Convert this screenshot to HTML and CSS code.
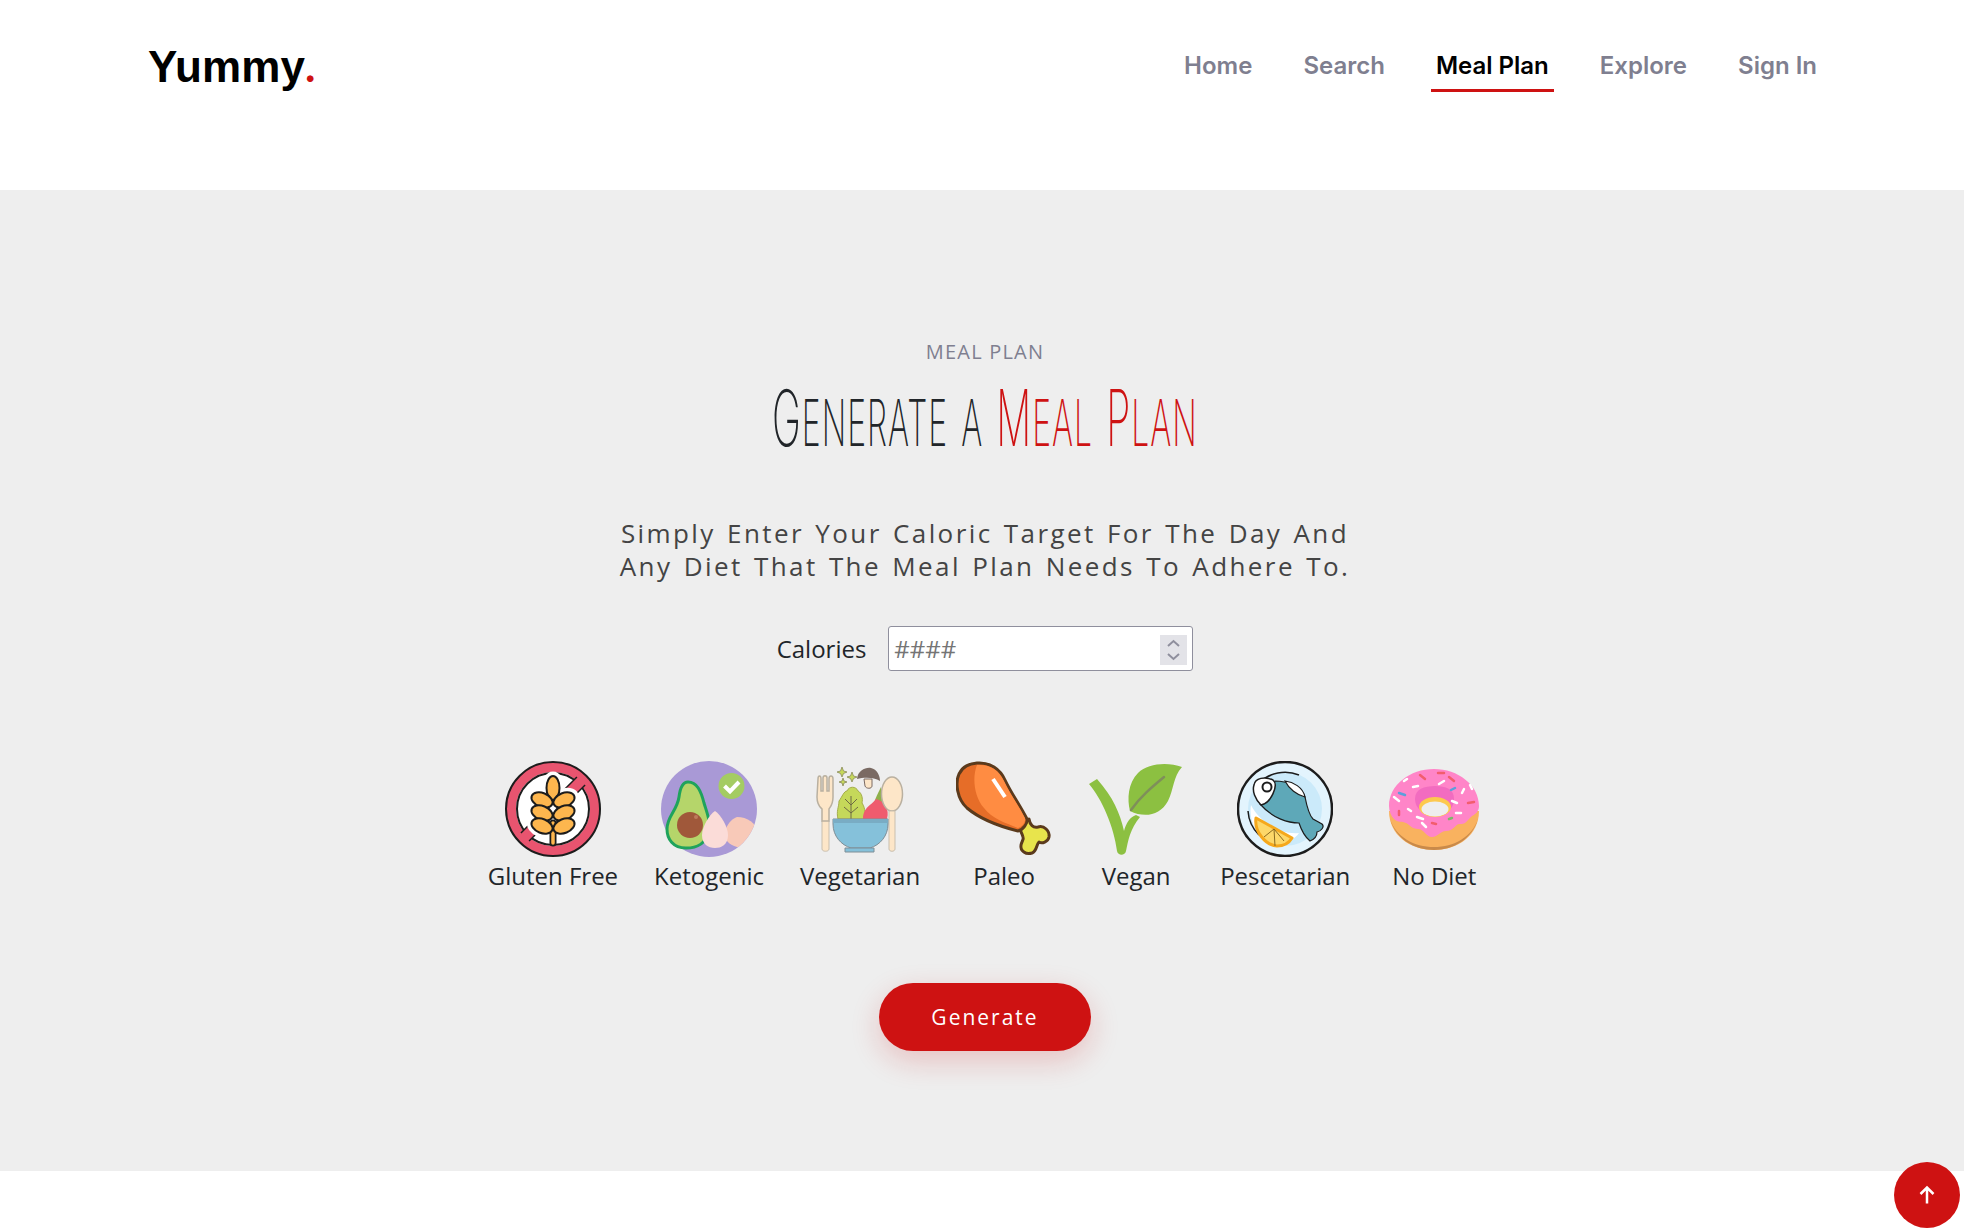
FILE: index.html
```html
<!DOCTYPE html>
<html lang="en">

<head>
    <meta charset="UTF-8">
    <title>Yummy - Meal Plan</title>
    <link rel="stylesheet" href="styles.css">
</head>

<body>

    <header class="header">
        <a class="logo" href="#">Yummy<span class="logo-dot">.</span></a>
        <nav class="nav">
            <a href="#">Home</a>
            <a href="#">Search</a>
            <a class="active" href="#">Meal Plan</a>
            <a href="#">Explore</a>
            <a href="#">Sign In</a>
        </nav>
    </header>

    <section class="plan">
        <p class="eyebrow">MEAL PLAN</p>
        <h1 class="title">
            <span class="title-inner"><span class="cap">G</span>enerate a <span class="red"><span class="cap">M</span>eal <span class="cap">P</span>lan</span></span>
        </h1>
        <p class="intro">Simply Enter Your Caloric Target For The Day And<br>Any Diet That The Meal Plan Needs To Adhere To.</p>

        <div class="calories">
            <label for="calories">Calories</label>
            <div class="input-wrap">
                <input id="calories" type="number" placeholder="####">
                <span class="spin">
                    <svg viewBox="0 0 27 30" width="27" height="30">
                        <path d="M8 11 L13.500 6 L19 11 M8 19 L13.500 24 L19 19" fill="none" stroke="#8f8f9d" stroke-width="2"/>
                    </svg>
                </span>
            </div>
        </div>

        <div class="diets">
            <div class="diet">
                <svg viewBox="0 0 96 96" width="96" height="96">
                    <defs>
                        <g id="wheat">
                            <ellipse cx="48" cy="27" rx="6.500" ry="12"/>
                            <ellipse cx="37" cy="39" rx="11" ry="7" transform="rotate(22 37 39)"/>
                            <ellipse cx="59" cy="39" rx="11" ry="7" transform="rotate(-22 59 39)"/>
                            <ellipse cx="37" cy="52" rx="11" ry="7" transform="rotate(22 37 52)"/>
                            <ellipse cx="59" cy="52" rx="11" ry="7" transform="rotate(-22 59 52)"/>
                            <ellipse cx="37" cy="65" rx="11" ry="7" transform="rotate(22 37 65)"/>
                            <ellipse cx="59" cy="65" rx="11" ry="7" transform="rotate(-22 59 65)"/>
                        </g>
                    </defs>
                    <circle cx="48" cy="48" r="42" fill="none" stroke="#e8546f" stroke-width="10"/>
                    <circle cx="48" cy="48" r="47" fill="none" stroke="#1c1c1c" stroke-width="2"/>
                    <circle cx="48" cy="48" r="36" fill="#fff" stroke="#1c1c1c" stroke-width="2"/>
                    <path d="M20 76 L76 20" stroke="#1c1c1c" stroke-width="13"/>
                    <path d="M17 79 L79 17" stroke="#e8546f" stroke-width="10"/>
                    <use href="#wheat" fill="#fff" stroke="#fff" stroke-width="9"/>
                    <path d="M48 62 V82" stroke="#1c1c1c" stroke-width="7" stroke-linecap="round"/>
                    <path d="M48 62 V82" stroke="#fdb64e" stroke-width="3.500" stroke-linecap="round"/>
                    <use href="#wheat" fill="#fdb64e" stroke="#1c1c1c" stroke-width="2"/>
                </svg>
                <span>Gluten Free</span>
            </div>

            <div class="diet">
                <svg viewBox="0 0 96 96" width="96" height="96">
                    <defs><clipPath id="keto"><circle cx="48" cy="48" r="48"/></clipPath></defs>
                    <circle cx="48" cy="48" r="48" fill="#a999d6"/>
                    <path d="M27 21 C36 21 40 30 43 42 C46 52 50 60 47 72 C44 84 34 87 25 87 C12 87 6 78 6 68 C6 55 16 50 18 36 C19 28 21 21 27 21Z" fill="#b5d56a" stroke="#1fa35c" stroke-width="3"/>
                    <circle cx="29" cy="64" r="13" fill="#a0583a"/>
                    <circle cx="35" cy="56" r="2" fill="#bd7a5c"/>
                    <g clip-path="url(#keto)">
                        <path d="M76 56 C86 56 96 62 96 72 C96 84 84 88 76 86 C68 84 62 78 64 70 C66 64 70 58 76 56Z" fill="#f8c9b8"/>
                    </g>
                    <path d="M54 50 C60 54 67 66 67 74 C67 84 60 87 54 87 C47 87 41 83 41 74 C41 66 48 54 54 50Z" fill="#fbdcd8"/>
                    <circle cx="70.500" cy="25" r="13" fill="#a4cc62"/>
                    <path d="M63.500 25 L69 30.500 L78 21" fill="none" stroke="#fff" stroke-width="4"/>
                </svg>
                <span>Ketogenic</span>
            </div>

            <div class="diet">
                <svg viewBox="0 0 96 96" width="96" height="96">
                    <path d="M52 18 H60 L60 25 C60 28 54 28 53 25Z" fill="#fde6c8" stroke="#7a6a63" stroke-width="1"/>
                    <path d="M45 18 C46 9 54 6 59 7 C65 8 68 15 68 20 C62 16 52 16 45 18Z" fill="#7a6a63"/>
                    <path d="M30 6 L31.500 10 L35 11 L31.500 12.500 L30 16 L28.500 12.500 L25 11 L28.500 10Z" fill="#c5d85a" stroke="#8a8a5a" stroke-width=".8"/>
                    <path d="M40 11 L41.500 15 L45 16 L41.500 17.500 L40 21 L38.500 17.500 L35 16 L38.500 15Z" fill="#c5d85a" stroke="#8a8a5a" stroke-width=".8"/>
                    <path d="M31 17 L32 20 L35 21 L32 22 L31 25 L30 22 L27 21 L30 20Z" fill="#c5d85a" stroke="#8a8a5a" stroke-width=".8"/>
                    <path d="M26 58 C24 50 27 46 27 40 C30 36 32 30 35 30 C37 25 44 25 46 30 C50 32 51 38 50 42 C54 48 53 54 52 58Z" fill="#c5d85a" stroke="#a4ad4a" stroke-width="1"/>
                    <path d="M39 35 V58 M39 44 L33 38 M39 44 L45 38 M39 52 L32 46 M39 52 L46 46" fill="none" stroke="#6e6a44" stroke-width="1"/>
                    <path d="M62 42 C64 36 66 32 69 26 L72 42Z" fill="#8fb04a"/>
                    <path d="M51 58 C51 46 60 44 64 38 C72 40 78 48 75 58Z" fill="#ef5b6e"/>
                    <path d="M10 60 V88 C10 91 17 91 17 88 V60" fill="#fde6c8" stroke="#c9bfae" stroke-width="1"/>
                    <path d="M6 18 C6 14 9 14 9 18 V30 H11 V17 C11 14 15 14 15 17 V30 H17 V18 C17 14 21 14 21 18 V36 C21 44 18 46 17 48 V60 H10 V48 C8 46 5 44 5 36Z" fill="#fde6c8" stroke="#b9b0a0" stroke-width="1.500"/>
                    <ellipse cx="80" cy="33" rx="10.500" ry="17" fill="#fde6c8" stroke="#b9b0a0" stroke-width="1.500"/>
                    <path d="M77 50 V88 C77 91 83 91 83 88 V50Z" fill="#fde6c8" stroke="#c9bfae" stroke-width="1"/>
                    <path d="M21 58 H76 V63 C76 75 68 84 58 87 H39 C29 84 21 75 21 63Z" fill="#85c1da" stroke="#7e8e96" stroke-width="1"/>
                    <path d="M21 58 H76 V62 H21Z" fill="#79acc4"/>
                    <path d="M33 87 H62 V91 H33Z" fill="#85c1da" stroke="#7e8e96" stroke-width="1"/>
                </svg>
                <span>Vegetarian</span>
            </div>

            <div class="diet">
                <svg viewBox="0 0 96 96" width="96" height="96">
                    <path d="M63 65 L73 58 C74 64 77 67 82 66 C88 64 94 70 93 76 C92 81 86 83 83 81 C80 84 81 90 76 92 C70 94 64 90 65 84 C66 80 68 78 67 76 C66 72 64 70 63 65Z" fill="#e8e44c" stroke="#5b3a1c" stroke-width="3" stroke-linejoin="round"/>
                    <path d="M21 2 C34 1 44 8 49 19 C55 32 64 44 71 58 C72 62 67 69 62 70 C46 66 24 58 11 47 C1 38 -1 22 3 13 C7 5 13 3 21 2Z" fill="#e66d28" stroke="#5b3a1c" stroke-width="3" stroke-linejoin="round"/>
                    <path d="M21 4 C34 3 43 9 48 20 C54 33 63 45 69 57 C70 61 66 66 62 67 C50 62 36 58 28 47 C18 36 16 16 21 4Z" fill="#ff8c42"/>
                    <path d="M37 18 L49 36" stroke="#fff" stroke-width="4"/>
                </svg>
                <span>Paleo</span>
            </div>

            <div class="diet">
                <svg viewBox="0 0 96 96" width="96" height="96">
                    <path d="M1 23 L9 18 C25 36 32 52 36 70 C38 62 42 56 48 54 L52 56 C42 68 40 80 38 90 C37 95 30 95 29 90 C26 66 14 38 1 23Z" fill="#8cc041"/>
                    <path d="M94 6 C80 1 60 2 50 12 C40 22 39 38 42 50 C56 57 72 55 80 40 C86 28 85 16 94 6Z" fill="#8cc041"/>
                    <path d="M43 49 C52 36 64 26 76 16" fill="none" stroke="#7f8f5a" stroke-width="2.500" stroke-linecap="round"/>
                </svg>
                <span>Vegan</span>
            </div>

            <div class="diet">
                <svg viewBox="0 0 96 96" width="96" height="96">
                    <circle cx="48" cy="48" r="47" fill="#e3f4fd" stroke="#1c1c1c" stroke-width="2.500"/>
                    <circle cx="48" cy="48" r="37" fill="#cbeafa"/>
                    <path d="M22 22 A37 37 0 0 1 62 14 M11 50 A37 37 0 0 0 22 74" fill="none" stroke="#1c1c1c" stroke-width="1.500"/>
                    <path d="M14 44 C22 60 42 74 62 72 C56 82 38 84 26 76 C16 68 12 56 14 44Z" fill="#fff"/>
                    <path d="M38 20 C50 20 64 26 68 36 C70 46 72 54 76 58 L85 63 C88 66 84 70 80 71 C80 74 78 78 73 80 C68 76 64 68 62 62 C52 62 36 58 23 43Z" fill="#5ea8b8" stroke="#1c1c1c" stroke-width="1.200"/>
                    <path d="M17 24 C18 17 28 15 36 19 C42 24 34 42 24 44 C18 38 15 30 17 24Z" fill="#fff" stroke="#1c1c1c" stroke-width="1.500"/>
                    <circle cx="30" cy="26" r="4.500" fill="#fff" stroke="#1c1c1c" stroke-width="2"/>
                    <path d="M48 20 C56 21 66 26 68 36 C60 34 52 28 48 20Z" fill="#fff" stroke="#1c1c1c" stroke-width="1.200"/>
                    <path d="M19 57 C17 70 28 84 40 85 C46 85 52 82 55 77Z" fill="#fdd869" stroke="#f5a81c" stroke-width="3" stroke-linejoin="round"/>
                    <path d="M37 68 L27 76 M37 68 L38 85 M37 68 L47 80" fill="none" stroke="#8a6a20" stroke-width="1"/>
                </svg>
                <span>Pescetarian</span>
            </div>

            <div class="diet">
                <svg viewBox="0 0 96 96" width="96" height="96">
                    <path d="M3 50 C3 74 24 89 48 89 C72 89 93 74 93 50Z" fill="#f9b25f"/>
                    <path d="M4 58 C10 78 28 89 48 89 C68 89 86 78 92 58 C86 76 68 86 48 86 C28 86 10 76 4 58Z" fill="#c98a4a"/>
                    <path d="M3 45 C3 24 24 8 48 8 C72 8 93 24 93 45 C93 50 90 53 86 55 C82 58 80 64 74 63 C70 62 68 70 60 70 C54 70 52 76 46 76 C40 76 38 68 32 68 C26 68 24 64 20 62 C16 60 12 62 8 58 C5 55 3 50 3 45Z" fill="#ff85c8"/>
                    <path d="M29 38 C29 28 38 25 49 25 C60 25 68 28 68 38 C68 48 60 54 49 54 C38 54 29 48 29 38Z" fill="#f26cc0"/>
                    <ellipse cx="49" cy="46" rx="16" ry="10" fill="#fdc94e"/>
                    <ellipse cx="49" cy="48" rx="13.500" ry="7.500" fill="#eee"/>
                    <g stroke-width="2.500" stroke-linecap="round">
                        <path d="M34 14 L39 18 M52 12 L58 12 M63 16 L68 20" stroke="#f25d6e"/>
                        <path d="M18 20 L21 18 M27 26 L32 25 M53 23 L58 20 M8 36 L13 40 M66 40 L71 42 M76 32 L78 28 M84 24 L86 28 M70 52 L75 52 M31 56 L37 58 M22 48 L25 50" stroke="#fff"/>
                        <path d="M13 32 L19 34 M65 29 L69 27" stroke="#5d9fdb"/>
                        <path d="M82 42 L88 41 M13 50 L13 54 M46 62 L50 63" stroke="#f25d6e"/>
                        <path d="M63 58 L66 57" stroke="#7cb86a"/>
                        <path d="M36 62 L40 66" stroke="#fff"/>
                    </g>
                </svg>
                <span>No Diet</span>
            </div>
        </div>

        <button class="generate">Generate</button>
    </section>

    <a class="to-top" href="#">
        <svg viewBox="0 0 24 24" width="24" height="24">
            <path d="M12 20.500 V4.500 M5.500 11 L12 4.500 L18.500 11" fill="none" stroke="#fff" stroke-width="2.500"/>
        </svg>
    </a>

</body>

</html>
```

FILE: styles.css
```css
* {
    box-sizing: border-box;
}

html,
body {
    margin: 0;
    height: 100%;
}

body {
    background: #fff;
    font-family: "Open Sans", sans-serif;
    overflow: hidden;
}

a {
    text-decoration: none;
}

.header {
    height: 190px;
    padding: 36px 142px 0 148px;
    display: flex;
    justify-content: space-between;
    align-items: flex-start;
}

.logo {
    font-family: "Liberation Sans", sans-serif;
    font-size: 44px;
    font-weight: 700;
    line-height: 58px;
    letter-spacing: 0.1px;
    color: #000;
}

.logo-dot {
    font-family: Lato, sans-serif;
    color: #ce1212;
}

.nav {
    display: flex;
    gap: 41px;
    font-family: Inter, sans-serif;
    font-size: 24px;
    font-weight: 600;
}

.nav a {
    color: #7f7f90;
    padding: 13px 5px 6px;
    line-height: 34px;
    border-bottom: 3px solid transparent;
}

.nav a.active {
    color: #000;
    border-bottom-color: #ce1212;
}

.plan {
    height: 981px;
    background: #eee;
    padding: 146px 0 0 6px;
    display: flex;
    flex-direction: column;
    align-items: center;
}

.eyebrow {
    margin: 0;
    font-size: 20px;
    line-height: 32px;
    letter-spacing: 1.2px;
    color: #7f7f90;
}

.title {
    margin: 2px 0 0;
    height: 96px;
    font-family: Inter, sans-serif;
    font-size: 64px;
    font-weight: 250;
    line-height: 96px;
    letter-spacing: 2px;
    word-spacing: 6px;
    text-transform: uppercase;
    color: #212529;
    white-space: nowrap;
}

.title-inner {
    display: inline-block;
    transform: scaleX(0.5);
}

.cap {
    font-size: 78px;
}

.red {
    color: #ce1212;
}

.intro {
    margin: 51px 0 0;
    font-size: 26px;
    line-height: 33px;
    letter-spacing: 2.4px;
    word-spacing: 2.2px;
    text-align: center;
    color: #444;
}

.calories {
    margin-top: 43px;
    display: flex;
    align-items: center;
    gap: 22px;
    font-size: 24px;
    color: #212529;
}

.input-wrap {
    position: relative;
    height: 45px;
}

.calories input {
    display: block;
    width: 305px;
    height: 45px;
    padding: 0 5px;
    background: #fff;
    border: 1px solid #8f8f9d;
    border-radius: 3px;
    font-family: "Open Sans", sans-serif;
    font-size: 24px;
    outline: none;
    appearance: textfield;
}

.calories input::placeholder {
    color: #757575;
}

.calories input::-webkit-inner-spin-button {
    display: none;
}

.spin {
    position: absolute;
    top: 9px;
    right: 6px;
    width: 27px;
    height: 30px;
    background: #e3e3e8;
}

.spin svg {
    display: block;
}

.diets {
    margin-top: 90px;
    display: flex;
    gap: 36px;
}

.diet {
    display: flex;
    flex-direction: column;
    align-items: center;
    font-size: 24px;
    line-height: 32px;
    color: #212529;
}

.diet svg {
    display: block;
    margin-bottom: 3px;
}

.generate {
    margin-top: 91px;
    width: 212px;
    height: 68px;
    background: #ce1212;
    border: 0;
    border-radius: 34px;
    box-shadow: 0 10px 30px rgba(206, 18, 18, 0.2);
    font-family: "Open Sans", sans-serif;
    font-size: 21px;
    font-weight: 500;
    letter-spacing: 2px;
    color: #fff;
}

.to-top {
    position: fixed;
    right: 4px;
    bottom: 4px;
    width: 66px;
    height: 66px;
    background: #ce1212;
    border-radius: 50%;
    display: flex;
    justify-content: center;
    align-items: center;
}
```
